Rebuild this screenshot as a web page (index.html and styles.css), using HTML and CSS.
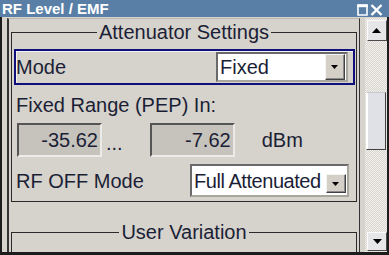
FILE: index.html
```html
<!DOCTYPE html>
<html>
<head>
<meta charset="utf-8">
<link rel="stylesheet" href="styles.css">
</head>
<body>
<div class="window">
  <div class="titlebar">
    <span class="title">RF Level / EMF</span>
    <div class="wbtns">
      <svg class="wmax" width="11" height="12" viewBox="0 0 11 12"><path d="M1 1.5 H10 V11 H1 Z" fill="none" stroke="#ffffff" stroke-width="1.6"/><rect x="0.2" y="0.2" width="10.6" height="3" fill="#ffffff"/></svg>
      <svg class="wclose" width="13" height="12" viewBox="0 0 13 12"><path d="M1.5 1 L11.5 11 M11.5 1 L1.5 11" stroke="#fff" stroke-width="2.4" fill="none"/></svg>
    </div>
  </div>
  <div class="client">
    <div class="panel">
      <fieldset class="group g1">
        <legend>Attenuator Settings</legend>
        <div class="mode-frame">
          <span class="lbl">Mode</span>
          <div class="combo combo-mode">
            <span class="ctext">Fixed</span>
            <span class="dd dd-full"><svg width="8" height="4" viewBox="0 0 8 4"><path d="M0 0 H7 L3.5 4 Z" fill="#000"/></svg></span>
          </div>
        </div>
        <div class="lbl range-lbl">Fixed Range (PEP) In:</div>
        <div class="range-row">
          <div class="field">-35.62</div>
          <span class="dots">...</span>
          <div class="field">-7.62</div>
          <span class="unit">dBm</span>
        </div>
        <div class="off-row">
          <span class="lbl">RF OFF Mode</span>
          <div class="combo combo-off">
            <span class="ctext">Full Attenuated</span>
            <span class="dd dd-low"><svg width="8" height="4" viewBox="0 0 8 4"><path d="M0 0 H7 L3.5 4 Z" fill="#000"/></svg></span>
          </div>
        </div>
      </fieldset>
      <fieldset class="group g2">
        <legend>User Variation</legend>
        <div class="g2-body"></div>
      </fieldset>
    </div>
    <div class="scrollbar">
      <div class="sb-btn sb-up"><svg width="10" height="5" viewBox="0 0 10 5"><path d="M0 5 H9 L4.5 0 Z" fill="#000"/></svg></div>
      <div class="sb-thumb"></div>
      <div class="sb-btn sb-down"><svg width="9" height="5" viewBox="0 0 9 5"><path d="M0 0 H9 L4.5 5 Z" fill="#000"/></svg></div>
    </div>
  </div>
</div>
</body>
</html>
```
FILE: styles.css
```css
* { box-sizing: border-box; }
html, body { margin: 0; padding: 0; background: #d6d2cc; }
body { width: 389px; height: 255px; overflow: hidden; font-family: "Liberation Sans", Arial, sans-serif; color: #1b1f36; }

.window { width: 389px; height: 255px; display: flex; flex-direction: column; }

.titlebar {
  height: 17px; background: #5a7fa7; display: flex; align-items: flex-start;
  padding: 1px 0 0 2px;
}
.title { color: #fff; font-weight: bold; font-size: 15px; line-height: 16px; flex: 1; }
.wbtns { display: flex; gap: 2px; padding-top: 3px; margin-right: 6px; flex: none; }
.wbtns svg { display: block; flex: none; }

.client {
  flex: 1; display: flex; min-height: 0;
  border-left: 2px solid #1c1c1c; border-right: 2px solid #1c1c1c; border-bottom: 3px solid #1c1c1c;
  background: #d6d2cc; padding-left: 5px;
}

.panel {
  width: 353px; margin-top: 1px; overflow: hidden;
  border-left: 2px solid #333; border-right: 1px solid #333; border-top: 1px solid #bcb8b2;
  padding: 0 2px 0 2px;
}

.group {
  margin: 0; padding: 0; min-width: 0; width: 346px;
  border: 1px solid #2a2a2a;
}
.group legend {
  margin: 0 auto; padding: 0 2px; font-size: 20px; line-height: 22px; color: #1b1f36;
}
.g1 { margin-top: 2px; padding-bottom: 4px; }
.g2 { margin-top: 19px; }
.g2-body { height: 40px; }

.lbl { font-size: 20px; line-height: 22px; white-space: nowrap; }

.mode-frame {
  margin: 6px 1px 0 2px; height: 36px; border: 2px solid #10107a;
  box-shadow: inset 1px 1px 0 #f2f2f2;
  display: flex; align-items: center;
}

.combo {
  margin-left: auto; background: #fff; display: flex;
  border: 2px solid; border-color: #6a6a6a #a9a6a0 #a9a6a0 #6a6a6a;
  font-size: 20px; line-height: 22px; overflow: hidden;
}
.ctext { padding-left: 2px; white-space: nowrap; flex: 1; overflow: hidden; }
.combo-mode { width: 132px; height: 30px; margin-right: 5px; align-items: center; }
.combo-off { width: 159px; height: 33px; margin-right: 7px; align-items: flex-end; }
.combo-off .ctext { align-self: center; letter-spacing: -0.45px; }

.dd {
  width: 20px; flex: none; background: #d4d0c8; display: flex; align-items: center; justify-content: center;
  border: 1px solid; border-color: #f4f4f4 #404040 #404040 #f4f4f4;
  box-shadow: inset -1px -1px 0 #8a8a8a;
}
.dd-full { height: 26px; margin-right: 1px; }
.dd-low { height: 19px; margin: 0 1px 2px 0; }

.range-lbl { margin-top: 9px; padding-left: 4px; }

.range-row { margin-top: 7px; display: flex; align-items: center; padding-left: 5px; font-size: 20px; line-height: 22px; }
.field {
  width: 85px; height: 34px; background: #c6c2bc; text-align: right; padding: 4px 2px 0 0;
  border: 2px solid; border-color: #555555 #ecebe8 #ecebe8 #555555;
}
.dots { margin: 5px 27px 0 4px; }
.unit { margin-left: 27px; }

.off-row { margin-top: 7px; display: flex; align-items: center; padding-left: 4px; }

.scrollbar {
  width: 22px; margin-left: 5px; margin-top: 1px; display: flex; flex-direction: column;
  background: repeating-conic-gradient(#f1f0ed 0 25%, #d8d5cf 0 50%) 0 0 / 2px 2px;
}
.sb-btn {
  width: 20px; margin-left: 2px; background: #e6e6e8; display: flex; align-items: center; justify-content: center;
  border: 1px solid; border-color: #fafafa #4a4a4a #4a4a4a #fafafa;
}
.sb-up { height: 21px; margin-top: 2px; }
.sb-down { height: 19px; margin-top: auto; margin-bottom: 1px; }
.sb-thumb {
  margin: 51px 0 0 1px; width: 20px; height: 58px; background: #dfe1e7;
  border: 1px solid; border-color: #c8c8c8 #404040 #404040 #fff;
  box-shadow: inset 1px 0 0 #fff;
}
```
